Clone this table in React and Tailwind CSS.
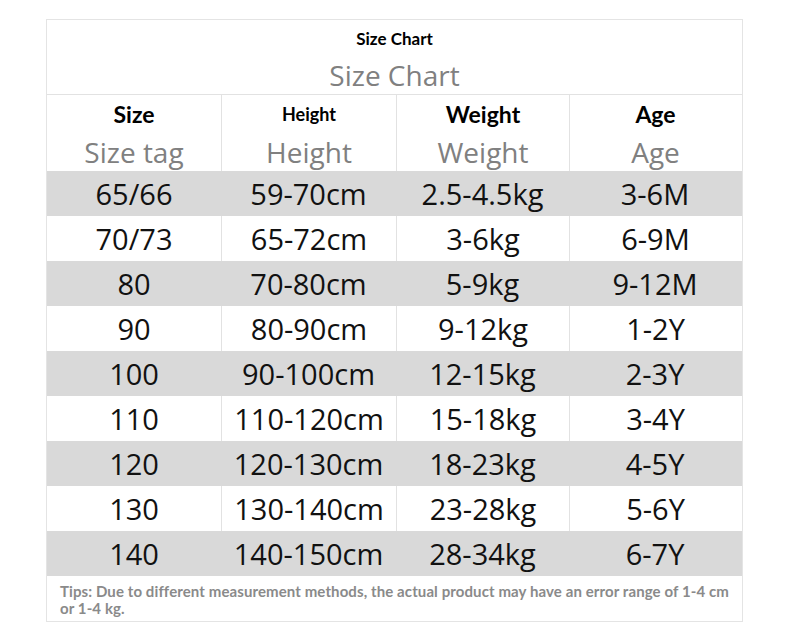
import React from "react";

const rows = [
  ["65/66", "59-70cm", "2.5-4.5kg", "3-6M"],
  ["70/73", "65-72cm", "3-6kg", "6-9M"],
  ["80", "70-80cm", "5-9kg", "9-12M"],
  ["90", "80-90cm", "9-12kg", "1-2Y"],
  ["100", "90-100cm", "12-15kg", "2-3Y"],
  ["110", "110-120cm", "15-18kg", "3-4Y"],
  ["120", "120-130cm", "18-23kg", "4-5Y"],
  ["130", "130-140cm", "23-28kg", "5-6Y"],
  ["140", "140-150cm", "28-34kg", "6-7Y"],
];

const cols = ["w-[174px]", "w-[175px]", "w-[173px]", "w-[172px]"];

const headers = [
  { top: "Size", topSize: "text-[23px]", sub: "Size tag" },
  { top: "Height", topSize: "text-[18px]", sub: "Height" },
  { top: "Weight", topSize: "text-[23px]", sub: "Weight" },
  { top: "Age", topSize: "text-[23px]", sub: "Age" },
];

export default function App() {
  return (
    <div className="min-h-screen bg-white pl-[46px] pt-[19px] font-['Open_Sans',sans-serif]">
      <div className="w-[697px] border border-[#e4e4e4]">
        {/* title */}
        <div className="h-[75px] flex flex-col items-center border-b border-[#e2e2e2]">
          <div className="mt-[7px] h-[24px] flex items-center text-[17px] font-bold text-black font-['Lato',sans-serif]">
            Size Chart
          </div>
          <div className="mt-[4px] text-[28px] leading-[40px] text-[#808080]">Size Chart</div>
        </div>

        {/* header */}
        <div className="flex h-[76px]">
          {headers.map((h, i) => (
            <div
              key={h.sub}
              className={`${cols[i]} flex flex-col items-center ${i > 0 ? "border-l border-[#e2e2e2]" : ""}`}
            >
              <div className={`h-[38px] flex items-center ${h.topSize} font-bold text-black font-['Lato',sans-serif]`}>
                {h.top}
              </div>
              <div className="text-[28px] leading-[38px] text-[#808080]">{h.sub}</div>
            </div>
          ))}
        </div>

        {/* data */}
        {rows.map((r, ri) => {
          const gray = ri % 2 === 0;
          return (
            <div key={r[0]} className={`flex h-[45px] ${gray ? "bg-[#d9d9d9]" : "bg-white"}`}>
              {r.map((c, ci) => (
                <div
                  key={ci}
                  className={`${cols[ci]} flex items-center justify-center text-[29px] text-[#111] ${
                    !gray && ci > 0 ? "border-l border-[#e2e2e2]" : ""
                  }`}
                >
                  {c}
                </div>
              ))}
            </div>
          );
        })}

        {/* tips */}
        <div className="h-[45px] px-[13px] pt-[7px] text-[15px] leading-[17px] tracking-[0.1px] font-bold text-[#8a8a8a] font-['Lato',sans-serif]">
          Tips: Due to different measurement methods, the actual product may have an error range of 1-4 cm or 1-4 kg.
        </div>
      </div>
    </div>
  );
}
